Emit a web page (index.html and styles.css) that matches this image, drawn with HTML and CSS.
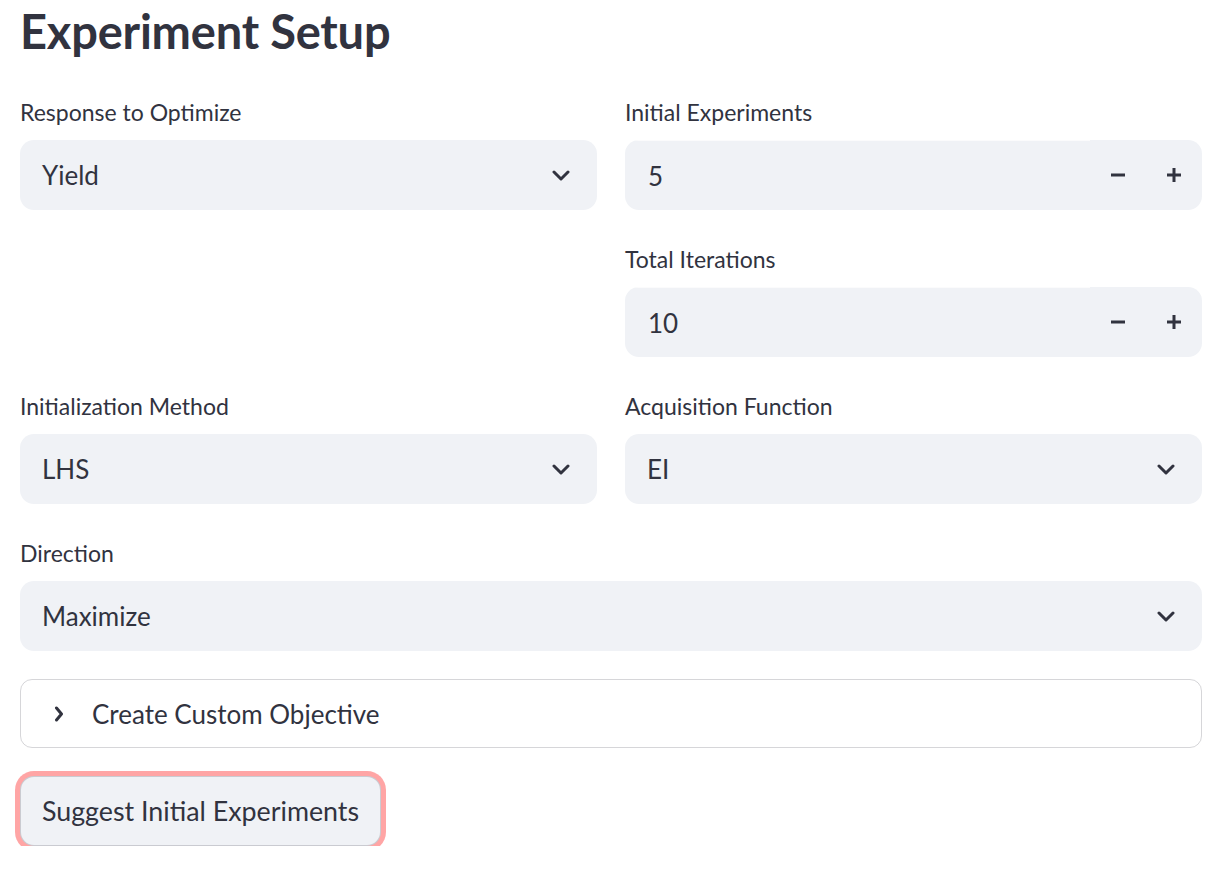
FILE: index.html
```html
<!DOCTYPE html>
<html lang="en">
<head>
<meta charset="utf-8">
<title>Experiment Setup</title>
<link rel="stylesheet" href="styles.css">
</head>
<body>
<div class="page">
  <h3 class="title">Experiment Setup</h3>
  <div class="stack">
    <div class="cols">
      <div class="col">
        <div class="widget">
          <div class="wlabel">Response to Optimize</div>
          <div class="select">
            <span class="value">Yield</span>
            <svg class="chev" width="18" height="11" viewBox="0 0 18 11"><polyline points="2,2 9,9 16,2" fill="none" stroke="#31333f" stroke-width="3" stroke-linecap="round" stroke-linejoin="round"/></svg>
          </div>
        </div>
      </div>
      <div class="col">
        <div class="widget">
          <div class="wlabel">Initial Experiments</div>
          <div class="number">
            <div class="num-field"><span class="value">5</span></div>
            <div class="step"><svg width="14" height="14" viewBox="0 0 14 14"><rect x="0" y="5.5" width="14" height="3" fill="#31333f"/></svg></div>
            <div class="step"><svg width="14" height="14" viewBox="0 0 14 14"><rect x="0" y="5.5" width="14" height="3" fill="#31333f"/><rect x="5.5" y="0" width="3" height="14" fill="#31333f"/></svg></div>
          </div>
        </div>
        <div class="widget">
          <div class="wlabel">Total Iterations</div>
          <div class="number">
            <div class="num-field"><span class="value">10</span></div>
            <div class="step"><svg width="14" height="14" viewBox="0 0 14 14"><rect x="0" y="5.5" width="14" height="3" fill="#31333f"/></svg></div>
            <div class="step"><svg width="14" height="14" viewBox="0 0 14 14"><rect x="0" y="5.5" width="14" height="3" fill="#31333f"/><rect x="5.5" y="0" width="3" height="14" fill="#31333f"/></svg></div>
          </div>
        </div>
      </div>
    </div>
    <div class="cols">
      <div class="col">
        <div class="widget">
          <div class="wlabel">Initialization Method</div>
          <div class="select">
            <span class="value">LHS</span>
            <svg class="chev" width="18" height="11" viewBox="0 0 18 11"><polyline points="2,2 9,9 16,2" fill="none" stroke="#31333f" stroke-width="3" stroke-linecap="round" stroke-linejoin="round"/></svg>
          </div>
        </div>
      </div>
      <div class="col">
        <div class="widget">
          <div class="wlabel">Acquisition Function</div>
          <div class="select">
            <span class="value">EI</span>
            <svg class="chev" width="18" height="11" viewBox="0 0 18 11"><polyline points="2,2 9,9 16,2" fill="none" stroke="#31333f" stroke-width="3" stroke-linecap="round" stroke-linejoin="round"/></svg>
          </div>
        </div>
      </div>
    </div>
    <div class="widget">
      <div class="wlabel">Direction</div>
      <div class="select">
        <span class="value">Maximize</span>
        <svg class="chev" width="18" height="11" viewBox="0 0 18 11"><polyline points="2,2 9,9 16,2" fill="none" stroke="#31333f" stroke-width="3" stroke-linecap="round" stroke-linejoin="round"/></svg>
      </div>
    </div>
    <div class="expander">
      <svg class="exp-chev" width="10" height="16" viewBox="0 0 10 16"><polyline points="2.5,2 7.5,8 2.5,14" fill="none" stroke="#31333f" stroke-width="3" stroke-linecap="round" stroke-linejoin="round"/></svg>
      <span class="exp-text">Create Custom Objective</span>
    </div>
    <div class="btn-row">
      <button class="btn">Suggest Initial Experiments</button>
    </div>
  </div>
</div>
</body>
</html>
```
FILE: styles.css
```css
* { box-sizing: border-box; }
html, body { margin: 0; padding: 0; background: #ffffff; }
body {
  font-family: Lato, "Open Sans", "Noto Sans", sans-serif;
  color: #31333f;
}
.page {
  width: 1230px;
  padding: 0 28px 0 20px;
}
.title {
  margin: 0;
  height: 63px;
  line-height: 63px;
  font-size: 47px;
  font-weight: 700;
  color: #31333f;
  letter-spacing: -0.2px;
}
.stack {
  margin-top: 28px;
  display: flex;
  flex-direction: column;
  gap: 28px;
}
.cols {
  display: grid;
  grid-template-columns: 1fr 1fr;
  gap: 28px;
}
.col {
  display: flex;
  flex-direction: column;
  gap: 28px;
}
.widget {
  display: flex;
  flex-direction: column;
}
.wlabel {
  height: 42px;
  margin-bottom: 7px;
  display: flex;
  align-items: center;
  font-size: 23px;
  color: #31333f;
}
.select {
  height: 70px;
  background: #f0f2f6;
  border-radius: 14px;
  display: flex;
  align-items: center;
  justify-content: space-between;
  padding: 0 27px 0 22px;
}
.value {
  font-size: 26px;
  color: #31333f;
}
.number {
  height: 70px;
  background: #f0f2f6;
  border-radius: 14px;
  display: flex;
  overflow: hidden;
}
.num-field {
  flex: 1;
  display: flex;
  align-items: center;
  padding-left: 23px;
  border-top: 1px solid #fbfbfc;
}
.step {
  width: 56px;
  display: flex;
  align-items: center;
  justify-content: center;
}
.expander {
  height: 69px;
  border: 1px solid rgba(49, 51, 63, 0.2);
  border-radius: 12px;
  display: flex;
  align-items: center;
  padding-left: 33px;
  gap: 28px;
}
.exp-text {
  font-size: 26px;
  color: #31333f;
}
.btn-row {
  display: flex;
}
.btn {
  height: 70px;
  padding: 0 21px;
  font-family: Lato, "Open Sans", "Noto Sans", sans-serif;
  font-size: 26.8px;
  color: #31333f;
  background: #f0f2f6;
  border: 1px solid rgba(49, 51, 63, 0.2);
  border-radius: 14px;
  box-shadow: 0 0 0 5px rgba(255, 75, 75, 0.5);
}
```
